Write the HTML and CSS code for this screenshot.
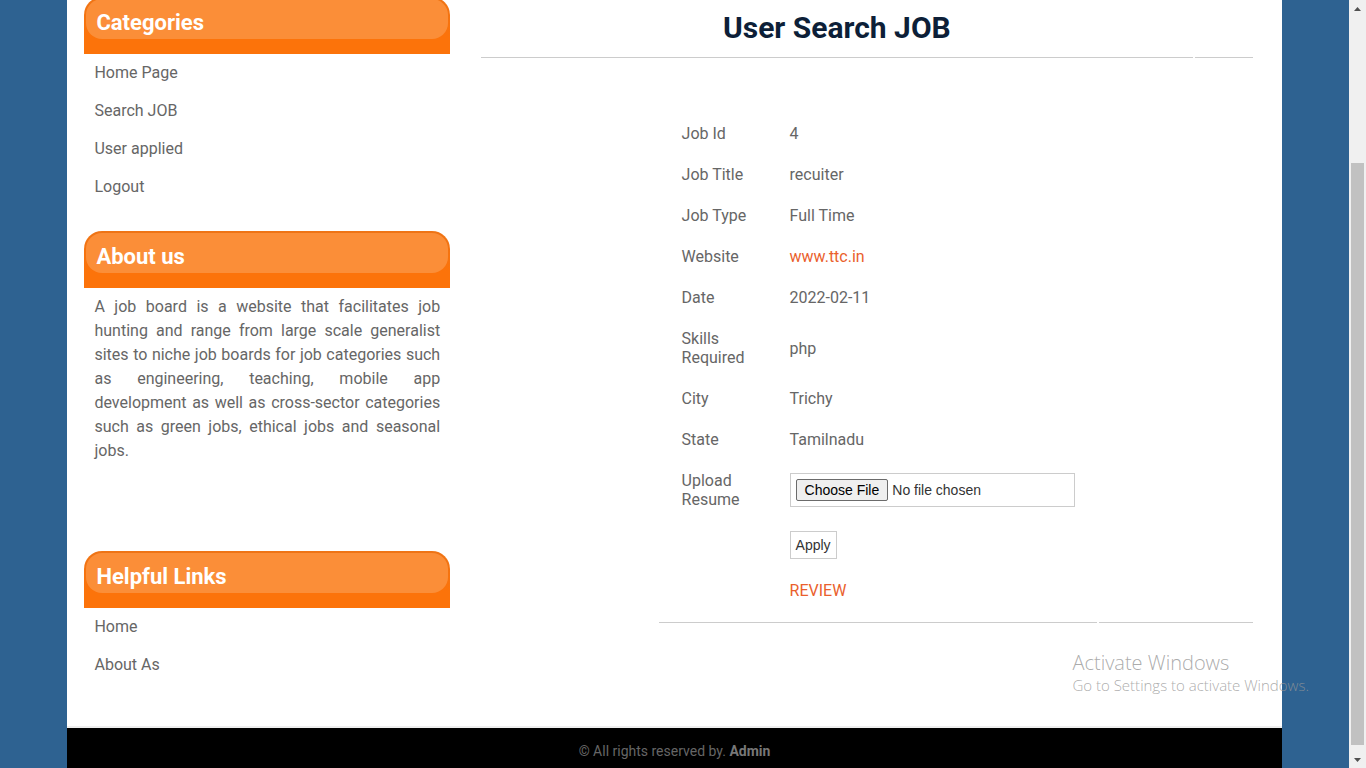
FILE: index.html
```html
<!DOCTYPE html>
<html lang="en">
<head>
<meta charset="utf-8">
<title>User Search JOB</title>
<link rel="stylesheet" href="styles.css">
</head>
<body>
<div class="viewport">
  <div class="page">
    <div class="container">
      <div class="columns">
        <aside class="sidebar">
          <section class="widget">
            <h3 class="widget-title"><span>Categories</span></h3>
            <ul class="links">
              <li><a href="#">Home Page</a></li>
              <li><a href="#">Search JOB</a></li>
              <li><a href="#">User applied</a></li>
              <li><a href="#">Logout</a></li>
            </ul>
          </section>
          <section class="widget widget-about">
            <h3 class="widget-title"><span>About us</span></h3>
            <p class="about">A job board is a website that facilitates job hunting and range from large scale generalist sites to niche job boards for job categories such as engineering, teaching, mobile app development as well as cross-sector categories such as green jobs, ethical jobs and seasonal jobs.</p>
          </section>
          <section class="widget">
            <h3 class="widget-title"><span>Helpful Links</span></h3>
            <ul class="links">
              <li><a href="#">Home</a></li>
              <li><a href="#">About As</a></li>
            </ul>
          </section>
        </aside>
        <main class="main">
          <h1 class="title">User Search JOB</h1>
          <div class="rule"><i class="rule-long"></i><i class="rule-short"></i></div>
          <form class="job">
            <table class="job-table">
              <tr><th scope="row">Job Id</th><td>4</td></tr>
              <tr><th scope="row">Job Title</th><td>recuiter</td></tr>
              <tr><th scope="row">Job Type</th><td>Full Time</td></tr>
              <tr><th scope="row">Website</th><td><a href="#">www.ttc.in</a></td></tr>
              <tr><th scope="row">Date</th><td>2022-02-11</td></tr>
              <tr><th scope="row">Skills Required</th><td>php</td></tr>
              <tr><th scope="row">City</th><td>Trichy</td></tr>
              <tr><th scope="row">State</th><td>Tamilnadu</td></tr>
              <tr><th scope="row"><label for="resume">Upload Resume</label></th><td><input class="file" type="file" id="resume"></td></tr>
              <tr><th></th><td><button class="apply" type="submit">Apply</button></td></tr>
              <tr><th></th><td><a href="#">REVIEW</a></td></tr>
            </table>
            <div class="rule rule-end"><i class="rule-long"></i><i class="rule-short"></i></div>
          </form>
        </main>
      </div>
      <footer class="footer">© All rights reserved by. <a href="#">Admin</a></footer>
    </div>
  </div>
  <div class="scrollbar">
    <svg class="arrow" viewBox="0 0 17 17"><path d="M5 11h7L8.500 7z" fill="#505050"/></svg>
    <div class="track"><div class="thumb"></div></div>
    <svg class="arrow" viewBox="0 0 17 17"><path d="M5 7h7L8.500 11z" fill="#505050"/></svg>
  </div>
</div>
<div class="watermark">
  <p class="watermark-title">Activate Windows</p>
  <p class="watermark-text">Go to Settings to activate Windows.</p>
</div>
</body>
</html>
```

FILE: styles.css
```css
* {
  box-sizing: border-box;
}

body {
  margin: 0;
  overflow: hidden;
  font: 16px Roboto, sans-serif;
  color: #666;
}

.viewport {
  display: flex;
  height: 100vh;
}

.page {
  flex: 1;
  display: flex;
  justify-content: center;
  overflow: hidden;
  background: #2e6291;
}

.container {
  width: 90%;
  display: flex;
  flex-direction: column;
  background: #fff;
}

.columns {
  display: grid;
  grid-template-columns: 366fr 772fr;
  gap: 31px;
  padding: 0 29px 0 17px;
  margin-top: -3px;
}

.widget {
  margin-bottom: 25px;
}

.widget-about {
  margin-bottom: 88px;
}

.widget-title {
  height: 57px;
  margin: 0;
  padding: 2px 2px 15px;
  border-radius: 18px 18px 0 0;
  background: linear-gradient(#ee7416, #fc730a 70%);
  color: #fff;
  font-size: 22px;
  line-height: 48px;
}

.widget-title span {
  display: block;
  height: 40px;
  padding-left: 10px;
  border-radius: 16px;
  background: #fb8e38;
}

.links {
  margin: 0;
  padding: 0 10px;
  list-style: none;
}

.links li {
  padding: 7px 0;
  line-height: 24px;
}

.links a {
  color: #666;
  text-decoration: none;
}

.about {
  margin: 0;
  padding: 7px 10px 0;
  line-height: 24px;
  text-align: justify;
}

.title {
  margin: 0;
  padding: 12px 60px 10px 0;
  color: #0d1f38;
  font-size: 30px;
  line-height: 38px;
  text-align: center;
}

.rule {
  display: flex;
  gap: 2px;
}

.rule-long,
.rule-short {
  height: 1px;
  background: #ccc;
}

.rule-long {
  flex: 1;
}

.rule-short {
  width: 58px;
}

.rule-end .rule-short {
  width: 154px;
}

.job {
  margin: 54px 0 0 23%;
}

.job-table {
  margin-left: 11px;
  border-spacing: 2px;
  line-height: 19px;
}

.job-table th,
.job-table td {
  padding: 10px;
  font-weight: normal;
  text-align: left;
  vertical-align: middle;
}

.job-table th {
  width: 106px;
}

.job-table a {
  color: #ea5f2d;
  text-decoration: none;
}

.job .rule-end {
  margin-top: 10px;
}

.file,
.apply {
  display: block;
  border: 1px solid #ccc;
  background: #fff;
  color: #333;
  font: 14px "Liberation Sans", sans-serif;
}

.file {
  width: 285px;
  height: 34px;
  padding: 5px;
}

.file::file-selector-button {
  height: 22px;
  padding: 0 8px;
  border: 1px solid #6b6b6b;
  border-radius: 2px;
  background: #efefef;
  color: #000;
  font: 14px "Liberation Sans", sans-serif;
}

.apply {
  height: 28px;
  padding: 0 5px;
}

.footer {
  flex: 1;
  margin-top: 17px;
  padding-top: 11px;
  border-top: 2px solid #eee;
  background: #000;
  font-size: 14px;
  line-height: 24px;
  text-align: center;
}

.footer a {
  color: #777;
  font-weight: bold;
  text-decoration: none;
}

.scrollbar {
  width: 17px;
  display: flex;
  flex-direction: column;
  background: #f0f0f0;
}

.arrow {
  width: 17px;
  height: 17px;
}

.track {
  flex: 1;
  display: flex;
  flex-direction: column;
  justify-content: flex-end;
  padding: 0 2px 6px;
}

.thumb {
  height: 80%;
  background: #c1c1c1;
}

.watermark {
  position: absolute;
  right: 57px;
  bottom: 73px;
  color: rgba(150, 150, 150, 0.8);
  font-family: "Open Sans", sans-serif;
  font-weight: 300;
}

.watermark p {
  margin: 0;
}

.watermark-title {
  font-size: 20px;
  line-height: 24px;
}

.watermark-text {
  font-size: 15px;
  line-height: 20px;
}
```
